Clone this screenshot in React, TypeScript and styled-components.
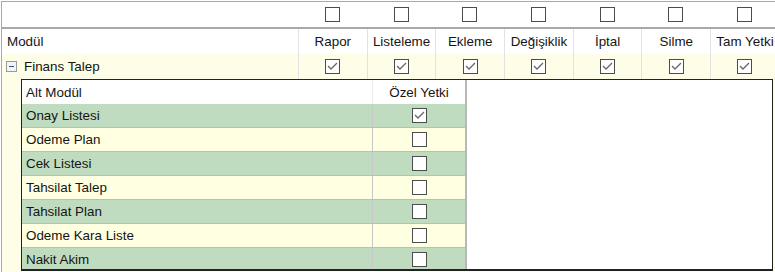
import React from "react"
import styled, { createGlobalStyle } from "styled-components"

const GlobalStyle = createGlobalStyle`
  body {
    margin: 0;
    background: #fff;
    font-family: "Liberation Sans", Arial, sans-serif;
  }
`

const Frame = styled.div`
  width: 774px;
  height: 271px;
  margin: 1px 0 0 1px;
  border-top: 1px solid #a9a9a9;
  border-left: 1px solid #a9a9a9;
  overflow: hidden;
  box-sizing: border-box;
  font-size: 13.4px;
  color: #151515;
`

const Row = styled.div<{ $bg?: string; $height: number; $sep?: boolean }>`
  display: grid;
  grid-template-columns: 296px repeat(7, 68.7px);
  height: ${p => p.$height}px;
  background: ${p => p.$bg || "#fff"};
  & > div + div {
    border-left: ${p => (p.$sep ? "1px solid #e2e2e2" : "none")};
  }
`

const TopRow = styled(Row)`
  border-bottom: 2px solid #a9a9a9;
`

const Cell = styled.div<{ $align?: string }>`
  display: flex;
  align-items: center;
  justify-content: ${p => p.$align || "center"};
  white-space: nowrap;
  overflow: hidden;
  box-sizing: border-box;
`

const NameCell = styled(Cell)`
  justify-content: flex-start;
  padding-left: 5px;
  gap: 7px;
`

const Expander = styled.span`
  width: 9px;
  height: 9px;
  border: 1px solid #9a9a9a;
  background: #f4f4f4;
  display: inline-flex;
  align-items: center;
  justify-content: center;
  margin-left: -1px;
  &::after {
    content: "";
    width: 5px;
    height: 1px;
    background: #2d4fa0;
  }
`

const Box = styled.span`
  display: inline-flex;
  align-items: center;
  justify-content: center;
  width: 15px;
  height: 15px;
  box-sizing: border-box;
  border: 1px solid #4c4c4c;
  background: #fff;
`

const Check = ({ on }: { on?: boolean }) => (
  <Box>
    {on && (
      <svg width="11" height="9" viewBox="0 0 11 9">
        <polyline points="1,4 4,7 10,1" fill="none" stroke="#666" strokeWidth="1.3" />
      </svg>
    )}
  </Box>
)

const Detail = styled.div`
  background: #fdfde8;
  padding-left: 19px;
  height: 193px;
`

const SubFrame = styled.div`
  width: 752px;
  height: 192px;
  box-sizing: border-box;
  border: 1px solid #222;
  border-width: 1px 1px 2px 1px;
  background: #fff;
  overflow: hidden;
`

const SubTable = styled.div`
  width: 445px;
  border-right: 2px solid #b8b8b8;
  box-sizing: border-box;
`

const SubRow = styled.div<{ $bg: string }>`
  display: grid;
  grid-template-columns: 350px 93px;
  height: 24px;
  background: ${p => p.$bg};
  border-bottom: 1px solid #bcbcbc;
  box-sizing: border-box;
  & > div + div {
    border-left: 1px solid #c8c8c8;
  }
`

const SubHead = styled(SubRow)`
  border-bottom: none;
  & > div + div {
    border-left: 1px solid #ececec;
  }
`

const SubName = styled(Cell)`
  justify-content: flex-start;
  padding-left: 4px;
`

const columns = ["Rapor", "Listeleme", "Ekleme", "Değişiklik", "İptal", "Silme", "Tam Yetki"]

const subModules = [
  { name: "Onay Listesi", on: true },
  { name: "Odeme Plan" },
  { name: "Cek Listesi" },
  { name: "Tahsilat Talep" },
  { name: "Tahsilat Plan" },
  { name: "Odeme Kara Liste" },
  { name: "Nakit Akim" },
]

const App = () => {
  return (
    <>
      <GlobalStyle />
      <Frame>
        <TopRow $height={25}>
          <Cell />
          {columns.map(c => (
            <Cell key={c}>
              <Check />
            </Cell>
          ))}
        </TopRow>
        <Row $height={25} $sep>
          <NameCell>Modül</NameCell>
          {columns.map(c => (
            <Cell key={c}>{c}</Cell>
          ))}
        </Row>
        <Row $height={25} $bg="#fdfde8" $sep>
          <NameCell>
            <Expander />
            Finans Talep
          </NameCell>
          {columns.map(c => (
            <Cell key={c}>
              <Check on />
            </Cell>
          ))}
        </Row>
        <Detail>
          <SubFrame>
            <SubTable>
              <SubHead $bg="#fff">
                <SubName>Alt Modül</SubName>
                <Cell>Özel Yetki</Cell>
              </SubHead>
              {subModules.map((m, i) => (
                <SubRow key={m.name} $bg={i % 2 === 0 ? "#c0dcc0" : "#ffffe2"}>
                  <SubName>{m.name}</SubName>
                  <Cell>
                    <Check on={m.on} />
                  </Cell>
                </SubRow>
              ))}
            </SubTable>
          </SubFrame>
        </Detail>
      </Frame>
    </>
  )
}

export default App
